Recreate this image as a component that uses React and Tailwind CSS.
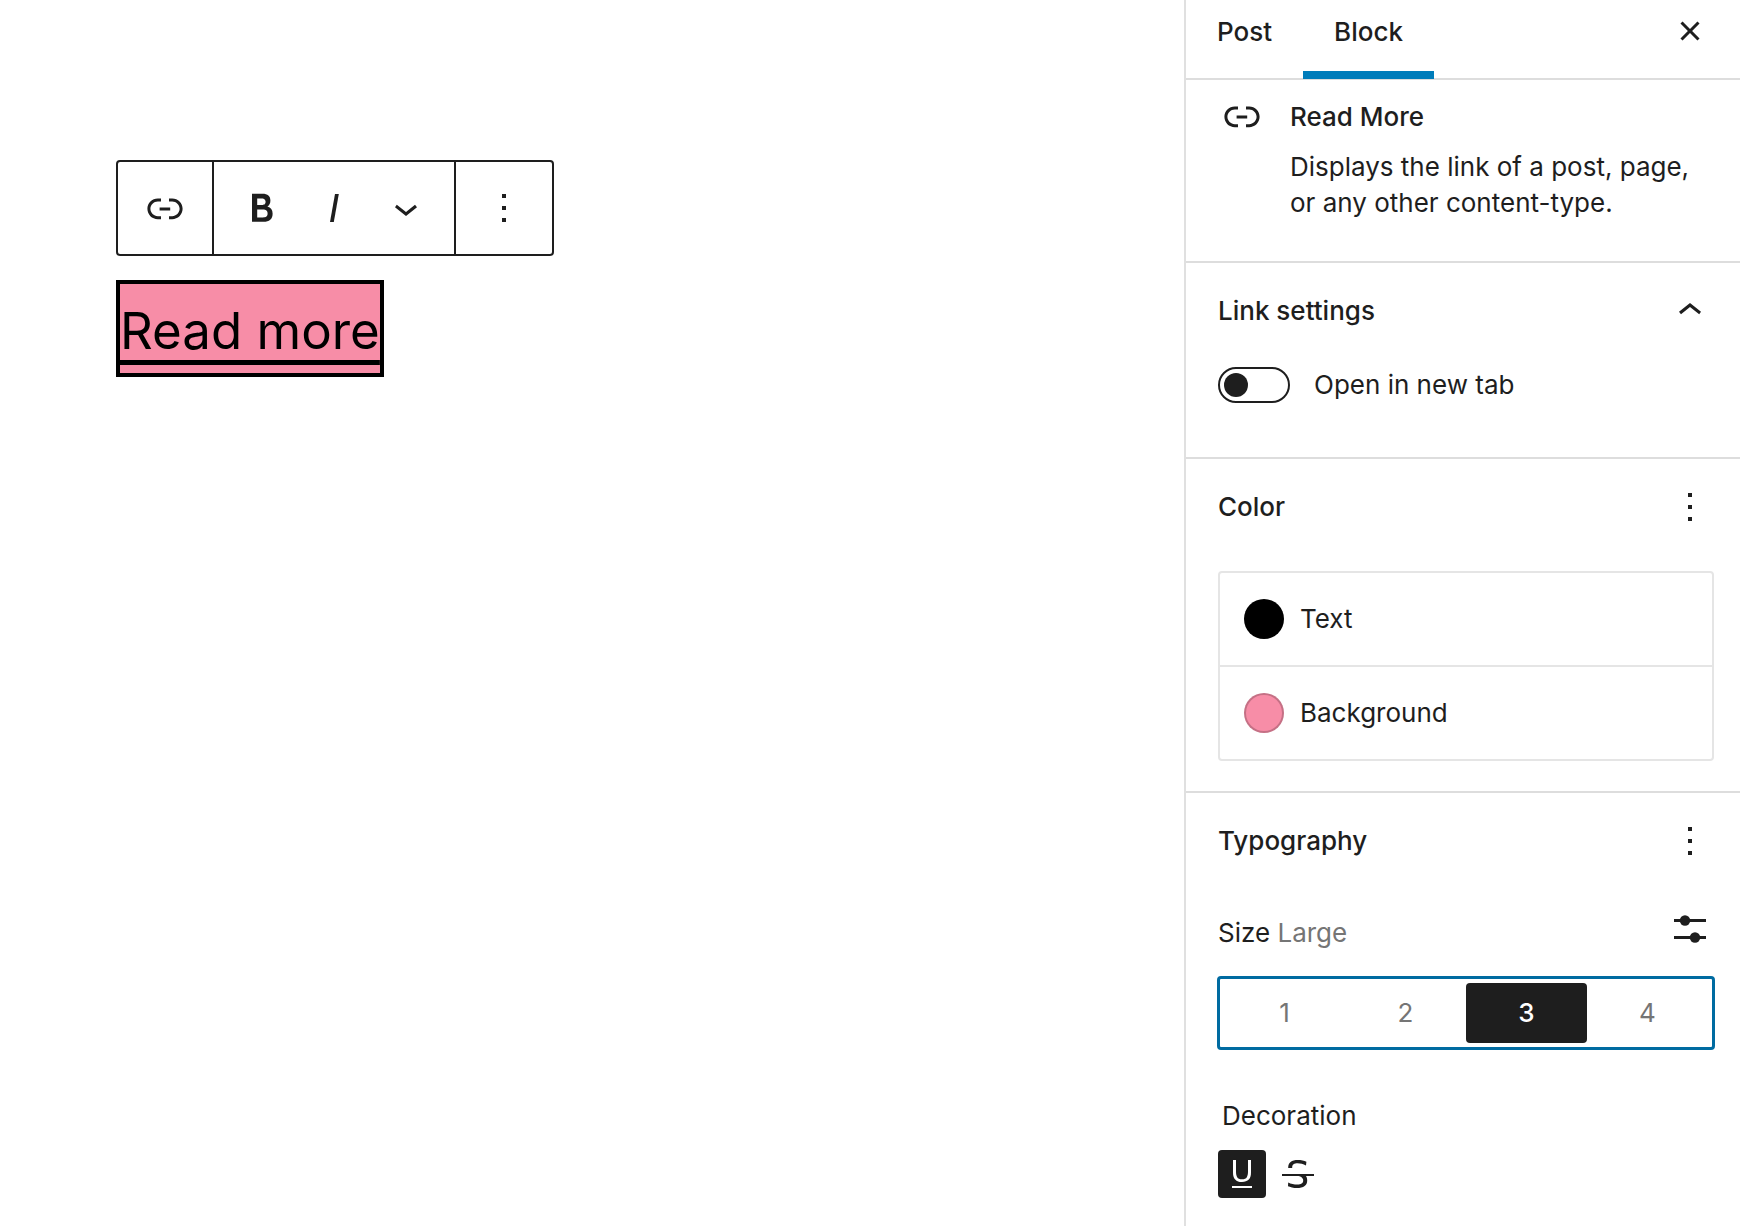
import { useState } from "react";

const PATHS = {
  link: "M15.6 7.2H14v1.5h1.6c2 0 3.7 1.7 3.7 3.7s-1.7 3.7-3.7 3.7H14v1.5h1.6c2.8 0 5.2-2.3 5.2-5.2 0-2.9-2.3-5.2-5.2-5.2zM4.7 12.4c0-2 1.7-3.7 3.7-3.7H10V7.2H8.4c-2.9 0-5.2 2.3-5.2 5.2 0 2.9 2.3 5.2 5.2 5.2H10v-1.5H8.4c-2 0-3.7-1.7-3.7-3.7zm4.6.9h5.3v-1.5H9.3v1.5z",
  bold: "M14.7 11.3c1-.6 1.5-1.6 1.5-3 0-2.3-1.3-3.4-4-3.4H7v14h5.8c1.4 0 2.5-.3 3.3-1 .8-.7 1.2-1.7 1.2-2.9.1-1.9-.8-3.1-2.6-3.7zm-5.1-4h2.3c.6 0 1.1.1 1.4.4.3.3.5.7.5 1.2s-.2 1-.5 1.2c-.3.3-.8.4-1.4.4H9.6V7.3zm4.6 9c-.4.3-1 .4-1.7.4H9.6v-3.9h2.9c.7 0 1.3.2 1.7.5.4.3.6.8.6 1.5s-.2 1.2-.6 1.5z",
  italic: "M12.5 5L10 19h1.9l2.5-14z",
  down: "M17.5 11.6L12 16l-5.5-4.4.9-1.2L12 14l4.5-3.6 1 1.2z",
  up: "M6.5 12.4L12 8l5.5 4.4-.9 1.2L12 10l-4.5 3.6-1-1.2z",
  more: "M13 19h-2v-2h2v2zm0-6h-2v-2h2v2zm0-6h-2V5h2v2z",
  close: "M12 13.06l3.712 3.713 1.061-1.06L13.061 12l3.712-3.712-1.06-1.06L12 10.938 8.288 7.227l-1.061 1.06L10.939 12l-3.712 3.712 1.06 1.061L12 13.061z",
  underline: "M7 18v1h10v-1H7zm5-2c1.5 0 2.6-.4 3.4-1.2.8-.8 1.1-2 1.1-3.5V5H15v5.8c0 1.2-.2 2.1-.6 2.8-.4.7-1.2 1-2.4 1s-2-.3-2.4-1c-.4-.7-.6-1.6-.6-2.8V5H7.5v6.2c0 1.5.3 2.7 1.1 3.5.8.9 1.9 1.3 3.4 1.3z",
  strike: "M9.1 9v-.5c0-.6.2-1.1.7-1.4.5-.3 1.2-.5 2-.5.7 0 1.4.1 2.1.3.7.2 1.4.5 2.1.9l.2-1.9c-.6-.3-1.2-.5-1.9-.7-.8-.1-1.6-.2-2.4-.2-1.5 0-2.7.3-3.6 1-.8.7-1.2 1.5-1.2 2.6V9h2zM20 12H4v1h8.3c.3.1.6.2.8.3.5.2.9.5 1.1.8.3.3.4.7.4 1.2 0 .7-.2 1.1-.8 1.5-.5.3-1.2.5-2.1.5-.8 0-1.6-.1-2.4-.3-.8-.2-1.5-.5-2.2-.8L7 18.1c.5.2 1.2.4 2 .6.8.2 1.6.3 2.4.3 1.7 0 3-.3 3.9-1 .9-.7 1.3-1.6 1.3-2.8 0-.9-.2-1.7-.7-2.2H20v-1z",
};

function Icon({ name }) {
  return (
    <svg viewBox="0 0 24 24" className="size-12 shrink-0 fill-current" aria-hidden="true">
      <path d={PATHS[name]} />
    </svg>
  );
}

function SettingsIcon() {
  return (
    <svg viewBox="0 0 48 48" className="size-12 fill-current" aria-hidden="true">
      <path d="M8 14h32v3H8zM8 31h32v3H8z" />
      <circle cx="19" cy="15.5" r="5.2" />
      <circle cx="29" cy="32.5" r="5.2" />
    </svg>
  );
}

function ToolButton({ name, label, className }) {
  return (
    <button type="button" aria-label={label} className={`flex items-center justify-center ${className}`}>
      <Icon name={name} />
    </button>
  );
}

function Toolbar() {
  return (
    <div role="toolbar" aria-label="Block tools" className="flex h-24 w-fit rounded-sm border-2 border-[#1e1e1e]">
      <ToolButton name="link" label="Read More" className="w-24 border-r-2 border-[#1e1e1e]" />
      <div className="flex border-r-2 border-[#1e1e1e] px-3">
        <ToolButton name="bold" label="Bold" className="w-18" />
        <ToolButton name="italic" label="Italic" className="w-18" />
        <ToolButton name="down" label="More formatting" className="w-18" />
      </div>
      <ToolButton name="more" label="Options" className="w-24" />
    </div>
  );
}

function PanelHeading({ title, icon, label }) {
  return (
    <div className="flex h-12 items-center justify-between">
      <h2 className="font-medium">{title}</h2>
      <button type="button" aria-label={label}>
        <Icon name={icon} />
      </button>
    </div>
  );
}

function ColorRow({ label, swatch }) {
  return (
    <button type="button" className="flex w-full items-center gap-4 px-6 py-[26px] text-left">
      <span className={`size-10 rounded-full border-2 border-black/20 ${swatch}`} />
      {label}
    </button>
  );
}

function SizePicker() {
  const [size, setSize] = useState("3");
  return (
    <div role="radiogroup" aria-label="Font size" className="-mx-px mt-[23px] grid grid-cols-4 rounded-sm border-3 border-[#006ba1] p-1">
      {["1", "2", "3", "4"].map((n) => (
        <label
          key={n}
          className="relative flex h-15 items-center justify-center rounded-sm text-[#757575] has-checked:bg-[#1e1e1e] has-checked:font-medium has-checked:text-white"
        >
          <input type="radio" name="size" value={n} checked={size === n} onChange={() => setSize(n)} className="sr-only" />
          {n}
        </label>
      ))}
    </div>
  );
}

export default function App() {
  const [newTab, setNewTab] = useState(false);
  return (
    <div className="flex min-h-screen bg-white font-['Inter',sans-serif] text-[26px] leading-9 text-[#1e1e1e]">
      <main className="flex-1 px-29 pt-40">
        <Toolbar />
        <a
          href="#read-more"
          className="mt-6 inline-block border-4 border-black bg-[#f78da7] pt-1 text-[51px] leading-[85px] whitespace-nowrap text-black underline decoration-5 underline-offset-11"
        >
          Read more
        </a>
      </main>

      <aside className="w-[556px] shrink-0 border-l-2 border-[#e0e0e0]">
        <header className="flex h-20 justify-between border-b-2 border-[#dddddd] pr-[26px]">
          <div role="tablist" className="flex font-medium">
            <button type="button" role="tab" aria-selected="false" className="-mb-px border-b-8 border-transparent px-[31px] pb-2">
              Post
            </button>
            <button type="button" role="tab" aria-selected="true" className="-mb-px border-b-8 border-[#007cba] px-[31px] pb-2">
              Block
            </button>
          </div>
          <button type="button" aria-label="Close settings" className="pb-4">
            <Icon name="close" />
          </button>
        </header>

        <section className="flex gap-6 border-b-2 border-[#dddddd] pt-3 pr-[26px] pb-10 pl-8">
          <Icon name="link" />
          <div className="pt-[7px]">
            <h2 className="font-medium">Read More</h2>
            <p className="mt-[14px]">Displays the link of a post, page, or any other content-type.</p>
          </div>
        </section>

        <section className="border-b-2 border-[#dddddd] pt-6 pr-[26px] pb-[54px] pl-8">
          <PanelHeading title="Link settings" icon="up" label="Collapse link settings" />
          <label className="mt-8 flex items-center gap-6">
            <input
              type="checkbox"
              role="switch"
              checked={newTab}
              onChange={(e) => setNewTab(e.target.checked)}
              className="flex h-9 w-18 appearance-none items-center rounded-full border-2 border-[#1e1e1e] px-1 before:size-6 before:rounded-full before:bg-[#1e1e1e] checked:justify-end"
            />
            Open in new tab
          </label>
        </section>

        <section className="border-b-2 border-[#dddddd] pt-6 pr-[26px] pb-[30px] pl-8">
          <PanelHeading title="Color" icon="more" label="Color options" />
          <div className="mt-10 divide-y-2 divide-[#e5e5e5] rounded-sm border-2 border-[#e5e5e5]">
            <ColorRow label="Text" swatch="bg-black" />
            <ColorRow label="Background" swatch="bg-[#f78da7]" />
          </div>
        </section>

        <section className="pt-6 pr-[26px] pb-6 pl-8">
          <PanelHeading title="Typography" icon="more" label="Typography options" />
          <div className="mt-10 flex h-12 items-end justify-between">
            <p className="leading-10">
              Size <span className="text-[#757575]">Large</span>
            </p>
            <button type="button" aria-label="Set custom size">
              <SettingsIcon />
            </button>
          </div>
          <SizePicker />
          <h3 className="mt-12 pl-1">Decoration</h3>
          <div className="mt-4 flex gap-2">
            <button type="button" aria-label="Underline" aria-pressed="true" className="rounded-sm bg-[#1e1e1e] text-white">
              <Icon name="underline" />
            </button>
            <button type="button" aria-label="Strikethrough" aria-pressed="false">
              <Icon name="strike" />
            </button>
          </div>
        </section>
      </aside>
    </div>
  );
}
